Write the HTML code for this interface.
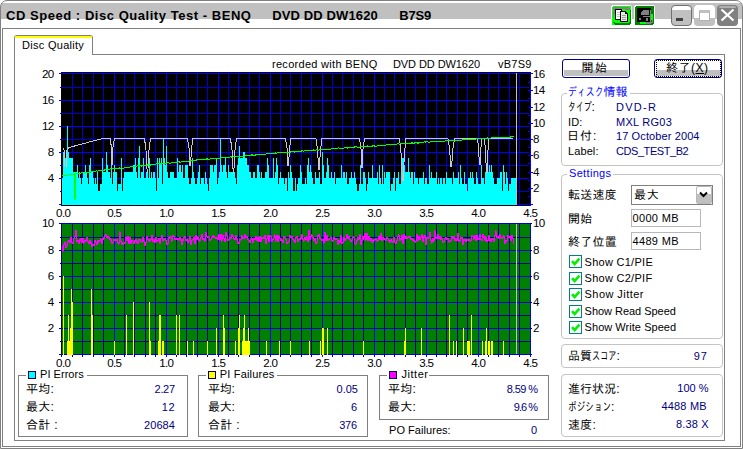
<!DOCTYPE html>
<html lang="ja">
<head>
<meta charset="utf-8">
<title>CD Speed : Disc Quality Test</title>
<style>
html,body{margin:0;padding:0;background:#fff;}
body{width:743px;height:449px;overflow:hidden;position:relative;font-family:"Liberation Sans","IPAGothic",sans-serif;font-size:11px;color:#000;}
#win div,#win svg{position:absolute;box-sizing:border-box;}
#win{position:absolute;left:0;top:0;width:743px;height:449px;background:#fff;overflow:hidden;}
.t{white-space:nowrap;line-height:14px;height:14px;font-size:11px;}
.ttl{white-space:nowrap;font-weight:bold;font-size:13px;line-height:16px;height:16px;}
.u{text-decoration:underline;}
.wm{background:#fff;}
.kw{display:inline-block;height:14px;vertical-align:top;}
.ks{display:inline-block;transform-origin:0 65%;}
.jp{font-size:12px;}
.nv{color:#000080;}
.bl{color:#0000ff;}
.r{text-align:right;}
.gb{border:1px solid #c4c4c4;border-radius:4px;}
.gbs{border:1px solid #808080;}
.btn{border:1px solid #000080;border-radius:3px;background:#fff;}
.btng{background:#c0c0c0;}
.edit{border:1px solid #b8b8b8;background:#fff;}
.cb{width:13px;height:13px;border:1px solid #008080;background:#fff;}
svg.charts{position:absolute;left:0;top:0;}
</style>
</head>
<body>
<div id="win">
<!-- title bar -->
<div style="left:0;top:0;width:743px;height:28px;background:#fff;"></div>
<div style="left:1px;top:3px;width:741px;height:16px;background:#c0c0c0;"></div>
<div style="left:0;top:0;width:743px;height:449px;border:1px solid #808080;border-radius:7px 7px 0 0;"></div>
<div style="left:2px;top:28px;width:739px;height:419px;border:1px solid #808080;"></div>
<svg style="left:610px;top:4px;" width="46" height="23" viewBox="610 4 46 23" shape-rendering="crispEdges">
<!-- copy icon -->
<rect x="611" y="5" width="21" height="21" rx="3" fill="#fff"/>
<rect x="612" y="6" width="19" height="19" rx="2" fill="#00ff00"/>
<path d="M613 7h8v2h-3v2h-2v3h-2v3h-1z" fill="#808080"/>
<path d="M621 7h7l2 2v1h-5v-1h-4z" fill="#808080"/>
<path d="M613 22h2v1h14v-1h1v-12h1v13l-2 2h-14l-2-2z" fill="#008000"/>
<rect x="615" y="9" width="7" height="11" fill="#000"/>
<rect x="616" y="10" width="5" height="9" fill="#fff"/>
<rect x="617" y="12" width="4" height="1" fill="#c0c0c0"/><rect x="617" y="14" width="4" height="1" fill="#c0c0c0"/><rect x="617" y="16" width="4" height="1" fill="#c0c0c0"/>
<path d="M620 11h5l3 3v8h-8z" fill="#000"/>
<path d="M621 12h4v2h2v7h-6z" fill="#e8e8e8"/>
<rect x="622" y="15" width="4" height="1" fill="#a0a0a0"/><rect x="622" y="17" width="4" height="1" fill="#a0a0a0"/><rect x="622" y="19" width="4" height="1" fill="#a0a0a0"/>
<!-- save icon -->
<rect x="634" y="5" width="21" height="21" rx="3" fill="#fff"/>
<rect x="635" y="6" width="19" height="19" rx="2" fill="#008000"/>
<rect x="637" y="8" width="14" height="14" fill="#000"/>
<path d="M641 12l2-2h6v5h-8z" fill="#808080"/>
<rect x="650" y="10" width="1" height="12" fill="#808080"/>
<rect x="643" y="16" width="7" height="1" fill="#808080"/>
<rect x="639" y="18" width="2" height="2" fill="#808080"/>
<rect x="646" y="18" width="2" height="3" fill="#808080"/>
<rect x="640" y="22" width="6" height="2" fill="#00ff00"/>
<path d="M646 22h6v-2h1v3h-2v1h-5z" fill="#808080"/>
<rect x="651" y="14" width="2" height="6" fill="#00ff00"/>
</svg>
<!-- caption buttons -->
<div style="left:671px;top:5px;width:21px;height:21px;border:1px solid #707070;border-radius:4px;background:linear-gradient(#fff 0,#fff 4px,#c0c0c0 4px);"></div>
<div style="left:676px;top:18px;width:7px;height:3px;background:#404040;"></div>
<div style="left:694px;top:5px;width:21px;height:21px;border-radius:4px;background:linear-gradient(#fff 0,#fff 13px,#c0c0c0 13px);"></div>
<div style="left:699px;top:10px;width:11px;height:11px;border:1px solid #b0b0b0;border-top:3px solid #c0c0c0;background:#fff;"></div>
<div style="left:717px;top:5px;width:21px;height:21px;border-radius:4px;background:#808080;"></div>
<div style="left:719px;top:6px;width:17px;height:2px;border-radius:2px 2px 0 0;background:#b0b0b0;"></div>
<svg style="left:720px;top:8px;" width="15" height="14" viewBox="0 0 15 14"><path d="M1.5 1.5L13.5 12.5M13.5 1.5L1.5 12.5" stroke="#fff" stroke-width="2.2" fill="none"/></svg>

<!-- tab -->
<div style="left:14px;top:54px;width:711px;height:387px;border:1px solid #808080;"></div>
<div style="left:14px;top:35px;width:79px;height:20px;border:1px solid #808080;border-bottom:none;border-radius:3px 3px 0 0;background:#fff;"></div>
<div style="left:15px;top:36px;width:77px;height:2px;background:#ffff00;"></div>
<svg class="charts" width="743" height="449" viewBox="0 0 743 449"><rect x="61" y="72" width="470" height="134" fill="#000"/><g shape-rendering="crispEdges"><rect x="72" y="73" width="1" height="133" fill="#0000c8"/><rect x="82" y="73" width="1" height="133" fill="#0000c8"/><rect x="93" y="73" width="1" height="133" fill="#0000c8"/><rect x="103" y="73" width="1" height="133" fill="#0000c8"/><rect x="114" y="73" width="1" height="133" fill="#00f"/><rect x="124" y="73" width="1" height="133" fill="#0000c8"/><rect x="134" y="73" width="1" height="133" fill="#0000c8"/><rect x="145" y="73" width="1" height="133" fill="#0000c8"/><rect x="155" y="73" width="1" height="133" fill="#0000c8"/><rect x="166" y="73" width="1" height="133" fill="#00f"/><rect x="176" y="73" width="1" height="133" fill="#0000c8"/><rect x="186" y="73" width="1" height="133" fill="#0000c8"/><rect x="197" y="73" width="1" height="133" fill="#0000c8"/><rect x="207" y="73" width="1" height="133" fill="#0000c8"/><rect x="218" y="73" width="1" height="133" fill="#00f"/><rect x="228" y="73" width="1" height="133" fill="#0000c8"/><rect x="238" y="73" width="1" height="133" fill="#0000c8"/><rect x="249" y="73" width="1" height="133" fill="#0000c8"/><rect x="259" y="73" width="1" height="133" fill="#0000c8"/><rect x="270" y="73" width="1" height="133" fill="#00f"/><rect x="280" y="73" width="1" height="133" fill="#0000c8"/><rect x="290" y="73" width="1" height="133" fill="#0000c8"/><rect x="301" y="73" width="1" height="133" fill="#0000c8"/><rect x="311" y="73" width="1" height="133" fill="#0000c8"/><rect x="322" y="73" width="1" height="133" fill="#00f"/><rect x="332" y="73" width="1" height="133" fill="#0000c8"/><rect x="342" y="73" width="1" height="133" fill="#0000c8"/><rect x="353" y="73" width="1" height="133" fill="#0000c8"/><rect x="363" y="73" width="1" height="133" fill="#0000c8"/><rect x="374" y="73" width="1" height="133" fill="#00f"/><rect x="384" y="73" width="1" height="133" fill="#0000c8"/><rect x="394" y="73" width="1" height="133" fill="#0000c8"/><rect x="405" y="73" width="1" height="133" fill="#0000c8"/><rect x="415" y="73" width="1" height="133" fill="#0000c8"/><rect x="426" y="73" width="1" height="133" fill="#00f"/><rect x="436" y="73" width="1" height="133" fill="#0000c8"/><rect x="446" y="73" width="1" height="133" fill="#0000c8"/><rect x="457" y="73" width="1" height="133" fill="#0000c8"/><rect x="467" y="73" width="1" height="133" fill="#0000c8"/><rect x="478" y="73" width="1" height="133" fill="#00f"/><rect x="488" y="73" width="1" height="133" fill="#0000c8"/><rect x="498" y="73" width="1" height="133" fill="#0000c8"/><rect x="509" y="73" width="1" height="133" fill="#0000c8"/><rect x="519" y="73" width="1" height="133" fill="#0000c8"/><rect x="530" y="73" width="1" height="133" fill="#00f"/><rect x="61" y="204" width="468" height="1" fill="#00f"/><rect x="59" y="204" width="2" height="1" fill="#00f"/><rect x="61" y="191" width="468" height="1" fill="#0000c8"/><rect x="60" y="191" width="1" height="1" fill="#00f"/><rect x="61" y="178" width="468" height="1" fill="#00f"/><rect x="59" y="178" width="2" height="1" fill="#00f"/><rect x="61" y="165" width="468" height="1" fill="#0000c8"/><rect x="60" y="165" width="1" height="1" fill="#00f"/><rect x="61" y="152" width="468" height="1" fill="#00f"/><rect x="59" y="152" width="2" height="1" fill="#00f"/><rect x="61" y="139" width="468" height="1" fill="#0000c8"/><rect x="60" y="139" width="1" height="1" fill="#00f"/><rect x="61" y="126" width="468" height="1" fill="#00f"/><rect x="59" y="126" width="2" height="1" fill="#00f"/><rect x="61" y="113" width="468" height="1" fill="#0000c8"/><rect x="60" y="113" width="1" height="1" fill="#00f"/><rect x="61" y="100" width="468" height="1" fill="#00f"/><rect x="59" y="100" width="2" height="1" fill="#00f"/><rect x="61" y="87" width="468" height="1" fill="#0000c8"/><rect x="60" y="87" width="1" height="1" fill="#00f"/><rect x="61" y="73" width="468" height="1" fill="#00f"/><rect x="59" y="73" width="2" height="1" fill="#00f"/><rect x="528" y="204" width="5" height="1" fill="#00f"/><rect x="528" y="196" width="2" height="1" fill="#00f"/><rect x="528" y="188" width="5" height="1" fill="#00f"/><rect x="528" y="180" width="2" height="1" fill="#00f"/><rect x="528" y="172" width="5" height="1" fill="#00f"/><rect x="528" y="163" width="2" height="1" fill="#00f"/><rect x="528" y="155" width="5" height="1" fill="#00f"/><rect x="528" y="147" width="2" height="1" fill="#00f"/><rect x="528" y="139" width="5" height="1" fill="#00f"/><rect x="528" y="131" width="2" height="1" fill="#00f"/><rect x="528" y="123" width="5" height="1" fill="#00f"/><rect x="528" y="115" width="2" height="1" fill="#00f"/><rect x="528" y="107" width="5" height="1" fill="#00f"/><rect x="528" y="98" width="2" height="1" fill="#00f"/><rect x="528" y="90" width="5" height="1" fill="#00f"/><rect x="528" y="82" width="2" height="1" fill="#00f"/><rect x="528" y="73" width="5" height="1" fill="#00f"/></g><path d="M62 205V178h1V205zM63 205V152h1V205zM64 205V152h1V205zM65 205V158h1V205zM66 205V152h1V205zM67 205V126h1V205zM68 205V152h1V205zM69 205V158h1V205zM70 205V158h1V205zM71 205V158h1V205zM72 205V158h1V205zM73 205V172h1V205zM74 205V172h1V205zM75 205V172h1V205zM76 205V172h1V205zM77 205V165h1V205zM78 205V178h1V205zM79 205V172h1V205zM80 205V178h1V205zM81 205V184h1V205zM82 205V178h1V205zM83 205V172h1V205zM84 205V172h1V205zM85 205V165h1V205zM86 205V172h1V205zM87 205V178h1V205zM88 205V184h1V205zM89 205V165h1V205zM90 205V158h1V205zM91 205V172h1V205zM92 205V172h1V205zM93 205V178h1V205zM94 205V184h1V205zM95 205V178h1V205zM96 205V184h1V205zM97 205V172h1V205zM98 205V191h1V205zM99 205V191h1V205zM100 205V184h1V205zM101 205V184h1V205zM102 205V158h1V205zM103 205V172h1V205zM104 205V172h1V205zM105 205V172h1V205zM106 205V152h1V205zM107 205V165h1V205zM108 205V172h1V205zM109 205V172h1V205zM110 205V178h1V205zM111 205V158h1V205zM112 205V184h1V205zM113 205V172h1V205zM114 205V165h1V205zM115 205V172h1V205zM116 205V172h1V205zM117 205V191h1V205zM118 205V184h1V205zM119 205V184h1V205zM120 205V184h1V205zM121 205V158h1V205zM122 205V191h1V205zM123 205V178h1V205zM124 205V172h1V205zM125 205V172h1V205zM126 205V172h1V205zM127 205V172h1V205zM128 205V172h1V205zM129 205V172h1V205zM130 205V172h1V205zM131 205V172h1V205zM132 205V172h1V205zM133 205V165h1V205zM134 205V165h1V205zM135 205V158h1V205zM136 205V172h1V205zM137 205V178h1V205zM138 205V158h1V205zM139 205V146h1V205zM140 205V178h1V205zM141 205V172h1V205zM142 205V172h1V205zM143 205V158h1V205zM144 205V178h1V205zM145 205V178h1V205zM146 205V172h1V205zM147 205V172h1V205zM148 205V178h1V205zM149 205V158h1V205zM150 205V178h1V205zM151 205V172h1V205zM152 205V178h1V205zM153 205V172h1V205zM154 205V172h1V205zM155 205V178h1V205zM156 205V191h1V205zM157 205V158h1V205zM158 205V178h1V205zM159 205V158h1V205zM160 205V165h1V205zM161 205V158h1V205zM162 205V184h1V205zM163 205V139h1V205zM164 205V158h1V205zM165 205V165h1V205zM166 205V146h1V205zM167 205V172h1V205zM168 205V178h1V205zM169 205V178h1V205zM170 205V172h1V205zM171 205V172h1V205zM172 205V172h1V205zM173 205V172h1V205zM174 205V178h1V205zM175 205V178h1V205zM176 205V178h1V205zM177 205V158h1V205zM178 205V172h1V205zM179 205V165h1V205zM180 205V165h1V205zM181 205V172h1V205zM182 205V165h1V205zM183 205V178h1V205zM184 205V178h1V205zM185 205V165h1V205zM186 205V165h1V205zM187 205V165h1V205zM188 205V178h1V205zM189 205V184h1V205zM190 205V184h1V205zM191 205V178h1V205zM192 205V158h1V205zM193 205V172h1V205zM194 205V178h1V205zM195 205V184h1V205zM196 205V184h1V205zM197 205V178h1V205zM198 205V172h1V205zM199 205V165h1V205zM200 205V184h1V205zM201 205V178h1V205zM202 205V178h1V205zM203 205V178h1V205zM204 205V184h1V205zM205 205V172h1V205zM206 205V178h1V205zM207 205V184h1V205zM208 205V191h1V205zM209 205V178h1V205zM210 205V165h1V205zM211 205V165h1V205zM212 205V165h1V205zM213 205V172h1V205zM214 205V165h1V205zM215 205V165h1V205zM216 205V158h1V205zM217 205V184h1V205zM218 205V178h1V205zM219 205V172h1V205zM220 205V139h1V205zM221 205V165h1V205zM222 205V172h1V205zM223 205V165h1V205zM224 205V165h1V205zM225 205V158h1V205zM226 205V172h1V205zM227 205V178h1V205zM228 205V165h1V205zM229 205V172h1V205zM230 205V172h1V205zM231 205V172h1V205zM232 205V172h1V205zM233 205V172h1V205zM234 205V172h1V205zM235 205V178h1V205zM236 205V184h1V205zM237 205V165h1V205zM238 205V158h1V205zM239 205V146h1V205zM240 205V158h1V205zM241 205V158h1V205zM242 205V158h1V205zM243 205V152h1V205zM244 205V152h1V205zM245 205V158h1V205zM246 205V158h1V205zM247 205V165h1V205zM248 205V165h1V205zM249 205V172h1V205zM250 205V172h1V205zM251 205V178h1V205zM252 205V178h1V205zM253 205V172h1V205zM254 205V172h1V205zM255 205V178h1V205zM256 205V178h1V205zM257 205V165h1V205zM258 205V165h1V205zM259 205V172h1V205zM260 205V178h1V205zM261 205V172h1V205zM262 205V178h1V205zM263 205V178h1V205zM264 205V178h1V205zM265 205V172h1V205zM266 205V172h1V205zM267 205V158h1V205zM268 205V165h1V205zM269 205V178h1V205zM270 205V178h1V205zM271 205V178h1V205zM272 205V178h1V205zM273 205V158h1V205zM274 205V178h1V205zM275 205V172h1V205zM276 205V158h1V205zM277 205V165h1V205zM278 205V184h1V205zM279 205V178h1V205zM280 205V172h1V205zM281 205V178h1V205zM282 205V178h1V205zM283 205V178h1V205zM284 205V184h1V205zM285 205V178h1V205zM286 205V178h1V205zM287 205V191h1V205zM288 205V172h1V205zM289 205V178h1V205zM290 205V165h1V205zM291 205V172h1V205zM292 205V178h1V205zM293 205V191h1V205zM294 205V191h1V205zM295 205V178h1V205zM296 205V191h1V205zM297 205V184h1V205zM298 205V178h1V205zM299 205V178h1V205zM300 205V165h1V205zM301 205V172h1V205zM302 205V184h1V205zM303 205V184h1V205zM304 205V184h1V205zM305 205V178h1V205zM306 205V184h1V205zM307 205V165h1V205zM308 205V158h1V205zM309 205V172h1V205zM310 205V165h1V205zM311 205V172h1V205zM312 205V178h1V205zM313 205V184h1V205zM314 205V184h1V205zM315 205V172h1V205zM316 205V178h1V205zM317 205V178h1V205zM318 205V178h1V205zM319 205V172h1V205zM320 205V184h1V205zM321 205V184h1V205zM322 205V152h1V205zM323 205V165h1V205zM324 205V178h1V205zM325 205V178h1V205zM326 205V172h1V205zM327 205V158h1V205zM328 205V165h1V205zM329 205V178h1V205zM330 205V178h1V205zM331 205V172h1V205zM332 205V178h1V205zM333 205V178h1V205zM334 205V172h1V205zM335 205V184h1V205zM336 205V178h1V205zM337 205V178h1V205zM338 205V178h1V205zM339 205V178h1V205zM340 205V178h1V205zM341 205V165h1V205zM342 205V178h1V205zM343 205V172h1V205zM344 205V172h1V205zM345 205V178h1V205zM346 205V172h1V205zM347 205V184h1V205zM348 205V184h1V205zM349 205V178h1V205zM350 205V178h1V205zM351 205V172h1V205zM352 205V178h1V205zM353 205V178h1V205zM354 205V172h1V205zM355 205V178h1V205zM356 205V184h1V205zM357 205V191h1V205zM358 205V191h1V205zM359 205V184h1V205zM360 205V165h1V205zM361 205V184h1V205zM362 205V184h1V205zM363 205V172h1V205zM364 205V172h1V205zM365 205V178h1V205zM366 205V191h1V205zM367 205V184h1V205zM368 205V172h1V205zM369 205V178h1V205zM370 205V178h1V205zM371 205V178h1V205zM372 205V165h1V205zM373 205V178h1V205zM374 205V178h1V205zM375 205V178h1V205zM376 205V178h1V205zM377 205V172h1V205zM378 205V184h1V205zM379 205V165h1V205zM380 205V178h1V205zM381 205V184h1V205zM382 205V165h1V205zM383 205V184h1V205zM384 205V172h1V205zM385 205V178h1V205zM386 205V172h1V205zM387 205V172h1V205zM388 205V172h1V205zM389 205V172h1V205zM390 205V191h1V205zM391 205V184h1V205zM392 205V184h1V205zM393 205V178h1V205zM394 205V172h1V205zM395 205V191h1V205zM396 205V178h1V205zM397 205V178h1V205zM398 205V172h1V205zM399 205V184h1V205zM400 205V184h1V205zM401 205V172h1V205zM402 205V158h1V205zM403 205V158h1V205zM404 205V165h1V205zM405 205V172h1V205zM406 205V172h1V205zM407 205V172h1V205zM408 205V158h1V205zM409 205V172h1V205zM410 205V178h1V205zM411 205V172h1V205zM412 205V172h1V205zM413 205V184h1V205zM414 205V172h1V205zM415 205V178h1V205zM416 205V178h1V205zM417 205V178h1V205zM418 205V184h1V205zM419 205V178h1V205zM420 205V178h1V205zM421 205V178h1V205zM422 205V178h1V205zM423 205V172h1V205zM424 205V184h1V205zM425 205V178h1V205zM426 205V178h1V205zM427 205V184h1V205zM428 205V184h1V205zM429 205V165h1V205zM430 205V178h1V205zM431 205V172h1V205zM432 205V178h1V205zM433 205V178h1V205zM434 205V178h1V205zM435 205V178h1V205zM436 205V172h1V205zM437 205V184h1V205zM438 205V178h1V205zM439 205V184h1V205zM440 205V178h1V205zM441 205V178h1V205zM442 205V184h1V205zM443 205V178h1V205zM444 205V178h1V205zM445 205V184h1V205zM446 205V172h1V205zM447 205V178h1V205zM448 205V178h1V205zM449 205V178h1V205zM450 205V178h1V205zM451 205V178h1V205zM452 205V184h1V205zM453 205V172h1V205zM454 205V178h1V205zM455 205V178h1V205zM456 205V178h1V205zM457 205V178h1V205zM458 205V172h1V205zM459 205V184h1V205zM460 205V165h1V205zM461 205V178h1V205zM462 205V184h1V205zM463 205V184h1V205zM464 205V172h1V205zM465 205V184h1V205zM466 205V184h1V205zM467 205V191h1V205zM468 205V178h1V205zM469 205V178h1V205zM470 205V172h1V205zM471 205V178h1V205zM472 205V172h1V205zM473 205V178h1V205zM474 205V184h1V205zM475 205V184h1V205zM476 205V172h1V205zM477 205V178h1V205zM478 205V184h1V205zM479 205V184h1V205zM480 205V184h1V205zM481 205V165h1V205zM482 205V178h1V205zM483 205V178h1V205zM484 205V184h1V205zM485 205V172h1V205zM486 205V165h1V205zM487 205V165h1V205zM488 205V172h1V205zM489 205V165h1V205zM490 205V172h1V205zM491 205V165h1V205zM492 205V172h1V205zM493 205V178h1V205zM494 205V184h1V205zM495 205V184h1V205zM496 205V184h1V205zM497 205V178h1V205zM498 205V178h1V205zM499 205V178h1V205zM500 205V172h1V205zM501 205V172h1V205zM502 205V191h1V205zM503 205V165h1V205zM504 205V172h1V205zM505 205V184h1V205zM506 205V172h1V205zM507 205V178h1V205zM508 205V191h1V205zM509 205V184h1V205zM510 205V184h1V205zM511 205V178h1V205zM512 205V178h1V205zM513 205V178h1V205zM514 205V178h1V205zM515 205V178h1V205zM516 205V178h1V205z" fill="#0ff" shape-rendering="crispEdges"/><polyline shape-rendering="crispEdges" fill="none" stroke="#c8c8c8" stroke-width="1" points="63.0,148.0 64.0,150.0 65.0,166.0 66.0,167.0 67.0,150.0 69.0,147.5 102.5,138.5 110.0,138.5 111.5,147.4 112.0,164.0 112.5,164.0 113.0,147.4 114.5,138.5 144.5,138.5 146.0,150.4 147.2,172.5 147.8,172.5 149.0,150.4 150.5,138.5 187.5,138.5 189.0,147.8 189.9,165.0 190.6,165.0 191.5,147.8 193.0,138.5 230.5,138.5 232.0,150.2 233.2,172.0 233.8,172.0 235.0,150.2 236.5,138.5 285.5,138.5 287.0,147.9 287.9,165.5 288.6,165.5 289.5,147.9 291.0,138.5 316.0,138.5 317.5,149.2 318.7,169.0 319.3,169.0 320.5,149.2 322.0,138.5 359.5,138.5 361.0,148.7 361.7,167.5 362.3,167.5 363.0,148.7 364.5,138.5 399.5,138.5 401.0,153.0 402.4,180.0 403.1,180.0 404.5,153.0 406.0,138.5 448.0,138.5 449.5,148.1 450.9,166.0 451.6,166.0 453.0,148.1 454.5,138.5 477.5,138.5 478.5,147.4 479.4,164.0 480.1,164.0 481.0,147.4 482.0,138.5 484.5,138.5 485.5,150.4 486.4,172.5 487.1,172.5 488.0,150.4 489.0,138.5 513.0,138.5"/><polyline shape-rendering="crispEdges" fill="none" stroke="#00ff00" stroke-width="1" points="62.0,176.1 63.0,175.0 64.0,175.8 65.0,175.2 66.0,175.6 67.0,174.9 68.0,175.3 69.0,174.1 70.0,174.5 71.0,173.9 72.0,174.2 73.0,174.1 74.0,174.4 74.5,173.8 75.0,200.0 75.5,173.8 76.0,174.2 77.0,173.5 78.0,173.4 79.0,173.8 80.0,173.1 81.0,173.0 82.0,172.4 83.0,172.7 84.0,173.1 85.0,173.0 86.0,172.3 87.0,172.2 88.0,172.1 89.0,172.4 90.0,172.3 91.0,171.7 92.0,171.6 93.0,171.9 94.0,171.3 95.0,171.7 96.0,171.0 97.0,170.9 98.0,171.3 99.0,170.2 100.0,170.5 101.0,170.9 102.0,170.3 103.0,170.2 104.0,170.1 105.0,169.9 106.0,169.3 107.0,169.7 108.0,170.1 109.0,169.5 110.0,168.8 111.0,168.7 112.0,169.1 113.0,168.5 114.0,168.9 115.0,168.7 116.0,168.6 117.0,168.5 118.0,168.4 119.0,167.8 120.0,168.2 121.0,168.0 122.0,167.9 123.0,168.3 124.0,168.2 125.0,167.6 126.0,167.5 127.0,167.4 128.0,167.2 129.0,167.6 130.0,167.0 131.0,166.9 132.0,166.3 133.0,167.2 134.0,166.6 135.0,166.0 136.0,166.4 137.0,166.2 138.0,165.6 139.0,166.5 140.0,165.4 141.0,165.8 142.0,166.2 143.0,165.6 144.0,165.0 145.0,165.4 146.0,165.3 147.0,165.7 148.0,164.6 149.0,165.0 150.0,165.4 151.0,164.7 152.0,164.6 153.0,164.5 154.0,164.4 155.0,164.3 156.0,164.2 157.0,163.6 158.0,164.0 159.0,163.9 160.0,163.8 161.0,164.2 162.0,163.1 163.0,164.0 164.0,162.9 165.0,163.3 166.0,163.7 167.0,163.1 168.0,162.5 169.0,162.9 170.0,163.3 171.0,163.2 172.0,162.6 173.0,163.0 174.0,161.9 175.0,162.8 176.0,162.2 177.0,162.1 178.0,162.0 179.0,161.4 180.0,162.3 181.0,162.2 182.0,161.6 183.0,162.0 184.0,160.9 185.0,161.8 186.0,161.2 187.0,161.6 188.0,161.5 189.0,160.9 190.0,160.8 191.0,160.7 192.0,160.6 193.0,161.0 194.0,160.4 195.0,160.4 196.0,160.8 197.0,159.7 198.0,159.6 199.0,160.0 200.0,159.9 201.0,159.8 202.0,159.7 203.0,159.6 204.0,159.0 205.0,159.4 206.0,159.3 207.0,158.7 208.0,159.6 209.0,159.0 210.0,159.0 211.0,158.9 212.0,158.3 213.0,158.7 214.0,158.6 215.0,158.5 216.0,158.9 217.0,158.3 218.0,158.2 219.0,158.1 220.0,158.0 221.0,158.0 222.0,157.4 223.0,157.8 224.0,157.7 225.0,157.6 226.0,157.0 227.0,157.4 228.0,157.8 229.0,157.2 230.0,157.2 231.0,156.6 232.0,157.5 233.0,156.9 234.0,156.3 235.0,156.7 236.0,156.1 237.0,156.0 238.0,156.5 239.0,156.4 240.0,156.3 241.0,156.2 242.0,156.1 243.0,156.0 244.0,156.4 245.0,155.8 246.0,155.8 247.0,155.7 248.0,156.1 249.0,155.5 250.0,155.4 251.0,155.3 252.0,154.7 253.0,155.2 254.0,155.1 255.0,155.5 256.0,154.4 257.0,154.3 258.0,154.2 259.0,154.7 260.0,154.6 261.0,154.0 262.0,154.9 263.0,154.3 264.0,154.2 265.0,154.7 266.0,154.1 267.0,153.5 268.0,153.9 269.0,153.8 270.0,153.7 271.0,153.7 272.0,154.1 273.0,153.5 274.0,153.4 275.0,152.8 276.0,153.3 277.0,153.2 278.0,152.6 279.0,153.0 280.0,152.9 281.0,152.3 282.0,152.8 283.0,152.7 284.0,152.6 285.0,152.5 286.0,152.4 287.0,152.4 288.0,151.8 289.0,152.7 290.0,152.6 291.0,151.5 292.0,152.0 293.0,151.9 294.0,151.8 295.0,152.2 296.0,151.6 297.0,151.1 298.0,151.5 299.0,151.4 300.0,151.3 301.0,151.3 302.0,150.7 303.0,151.1 304.0,151.0 305.0,150.9 306.0,150.4 307.0,150.8 308.0,150.2 309.0,150.6 310.0,151.1 311.0,150.0 312.0,150.4 313.0,149.8 314.0,150.2 315.0,150.2 316.0,150.1 317.0,149.5 318.0,150.4 319.0,149.9 320.0,149.8 321.0,149.7 322.0,149.6 323.0,149.6 324.0,150.0 325.0,149.4 326.0,149.3 327.0,149.3 328.0,149.2 329.0,149.6 330.0,149.0 331.0,149.0 332.0,148.9 333.0,148.3 334.0,148.7 335.0,148.2 336.0,148.1 337.0,149.0 338.0,147.9 339.0,147.9 340.0,148.8 341.0,148.2 342.0,148.1 343.0,148.1 344.0,148.0 345.0,147.9 346.0,147.3 347.0,147.8 348.0,148.2 349.0,147.6 350.0,147.5 351.0,147.5 352.0,147.4 353.0,147.3 354.0,147.2 355.0,146.7 356.0,146.6 357.0,147.0 358.0,147.0 359.0,147.4 360.0,146.8 361.0,146.2 362.0,146.2 363.0,146.1 364.0,147.0 365.0,146.0 366.0,146.4 367.0,145.8 368.0,146.2 369.0,146.2 370.0,146.1 371.0,146.0 372.0,146.5 373.0,145.4 374.0,145.8 375.0,146.2 376.0,146.2 377.0,146.1 378.0,145.5 379.0,146.0 380.0,145.4 381.0,145.3 382.0,145.2 383.0,145.2 384.0,145.1 385.0,145.0 386.0,145.0 387.0,144.9 388.0,144.8 389.0,144.8 390.0,144.7 391.0,144.1 392.0,145.0 393.0,144.0 394.0,144.4 395.0,144.3 396.0,144.3 397.0,144.2 398.0,143.6 399.0,144.1 400.0,144.0 401.0,143.9 402.0,143.9 403.0,143.8 404.0,143.7 405.0,143.6 406.0,143.6 407.0,144.0 408.0,143.4 409.0,142.9 410.0,143.3 411.0,143.7 412.0,142.7 413.0,143.6 414.0,143.5 415.0,142.5 416.0,142.9 417.0,142.8 418.0,143.3 419.0,142.7 420.0,142.1 421.0,142.6 422.0,142.5 423.0,142.9 424.0,141.9 425.0,141.8 426.0,142.2 427.0,141.7 428.0,142.1 429.0,142.0 430.0,142.0 431.0,141.9 432.0,141.8 433.0,141.8 434.0,141.2 435.0,141.6 436.0,141.6 437.0,141.5 438.0,141.4 439.0,141.4 440.0,141.3 441.0,141.2 442.0,141.2 443.0,141.1 444.0,141.0 445.0,141.0 446.0,140.4 447.0,140.8 448.0,140.8 449.0,140.2 450.0,140.6 451.0,141.1 452.0,140.5 453.0,140.4 454.0,140.4 455.0,140.3 456.0,140.2 457.0,140.2 458.0,140.1 459.0,140.1 460.0,140.0 461.0,140.4 462.0,139.9 463.0,139.8 464.0,139.7 465.0,139.7 466.0,139.6 467.0,139.5 468.0,139.5 469.0,139.9 470.0,139.3 471.0,139.3 472.0,139.2 473.0,139.2 474.0,139.1 475.0,139.0 476.0,139.0 477.0,138.9 478.0,138.3 479.0,138.3 480.0,139.2 481.0,138.6 482.0,138.1 483.0,138.5 484.0,139.0 485.0,138.4 486.0,138.8 487.0,137.8 488.0,138.2 489.0,138.1 490.0,138.6 491.0,138.0 492.0,137.5 493.0,137.4 494.0,137.8 495.0,137.8 496.0,137.2 497.0,137.6 498.0,137.6 499.0,138.0 500.0,137.5 501.0,136.9 502.0,137.3 503.0,137.3 504.0,137.2 505.0,137.1 506.0,137.1 507.0,137.5 508.0,137.0 509.0,137.4 510.0,136.8 511.0,137.3 512.0,136.2 513.0,136.6 514.0,136.1"/><rect x="516" y="73" width="1" height="132" fill="#c0c0c0" shape-rendering="crispEdges"/><rect x="61" y="223" width="470" height="132" fill="#008000"/><g shape-rendering="crispEdges"><rect x="61" y="223" width="1" height="134" fill="#000090"/><rect x="72" y="223" width="1" height="134" fill="#000090"/><rect x="82" y="223" width="1" height="134" fill="#000090"/><rect x="93" y="223" width="1" height="134" fill="#000090"/><rect x="103" y="223" width="1" height="134" fill="#000090"/><rect x="114" y="223" width="1" height="134" fill="#0000ff"/><rect x="124" y="223" width="1" height="134" fill="#000090"/><rect x="134" y="223" width="1" height="134" fill="#000090"/><rect x="145" y="223" width="1" height="134" fill="#000090"/><rect x="155" y="223" width="1" height="134" fill="#000090"/><rect x="166" y="223" width="1" height="134" fill="#0000ff"/><rect x="176" y="223" width="1" height="134" fill="#000090"/><rect x="186" y="223" width="1" height="134" fill="#000090"/><rect x="197" y="223" width="1" height="134" fill="#000090"/><rect x="207" y="223" width="1" height="134" fill="#000090"/><rect x="218" y="223" width="1" height="134" fill="#0000ff"/><rect x="228" y="223" width="1" height="134" fill="#000090"/><rect x="238" y="223" width="1" height="134" fill="#000090"/><rect x="249" y="223" width="1" height="134" fill="#000090"/><rect x="259" y="223" width="1" height="134" fill="#000090"/><rect x="270" y="223" width="1" height="134" fill="#0000ff"/><rect x="280" y="223" width="1" height="134" fill="#000090"/><rect x="290" y="223" width="1" height="134" fill="#000090"/><rect x="301" y="223" width="1" height="134" fill="#000090"/><rect x="311" y="223" width="1" height="134" fill="#000090"/><rect x="322" y="223" width="1" height="134" fill="#0000ff"/><rect x="332" y="223" width="1" height="134" fill="#000090"/><rect x="342" y="223" width="1" height="134" fill="#000090"/><rect x="353" y="223" width="1" height="134" fill="#000090"/><rect x="363" y="223" width="1" height="134" fill="#000090"/><rect x="374" y="223" width="1" height="134" fill="#0000ff"/><rect x="384" y="223" width="1" height="134" fill="#000090"/><rect x="394" y="223" width="1" height="134" fill="#000090"/><rect x="405" y="223" width="1" height="134" fill="#000090"/><rect x="415" y="223" width="1" height="134" fill="#000090"/><rect x="426" y="223" width="1" height="134" fill="#0000ff"/><rect x="436" y="223" width="1" height="134" fill="#000090"/><rect x="446" y="223" width="1" height="134" fill="#000090"/><rect x="457" y="223" width="1" height="134" fill="#000090"/><rect x="467" y="223" width="1" height="134" fill="#000090"/><rect x="478" y="223" width="1" height="134" fill="#0000ff"/><rect x="488" y="223" width="1" height="134" fill="#000090"/><rect x="498" y="223" width="1" height="134" fill="#000090"/><rect x="509" y="223" width="1" height="134" fill="#000090"/><rect x="519" y="223" width="1" height="134" fill="#000090"/><rect x="530" y="223" width="1" height="134" fill="#0000ff"/><rect x="61" y="354" width="469" height="1" fill="#0000e0"/><rect x="59" y="354" width="2" height="1" fill="#000090"/><rect x="530" y="354" width="2" height="1" fill="#000090"/><rect x="61" y="341" width="469" height="1" fill="#000090"/><rect x="60" y="341" width="1" height="1" fill="#000090"/><rect x="530" y="341" width="1" height="1" fill="#000090"/><rect x="61" y="328" width="469" height="1" fill="#0000e0"/><rect x="59" y="328" width="2" height="1" fill="#000090"/><rect x="530" y="328" width="2" height="1" fill="#000090"/><rect x="61" y="315" width="469" height="1" fill="#000090"/><rect x="60" y="315" width="1" height="1" fill="#000090"/><rect x="530" y="315" width="1" height="1" fill="#000090"/><rect x="61" y="302" width="469" height="1" fill="#0000e0"/><rect x="59" y="302" width="2" height="1" fill="#000090"/><rect x="530" y="302" width="2" height="1" fill="#000090"/><rect x="61" y="289" width="469" height="1" fill="#000090"/><rect x="60" y="289" width="1" height="1" fill="#000090"/><rect x="530" y="289" width="1" height="1" fill="#000090"/><rect x="61" y="276" width="469" height="1" fill="#0000e0"/><rect x="59" y="276" width="2" height="1" fill="#000090"/><rect x="530" y="276" width="2" height="1" fill="#000090"/><rect x="61" y="263" width="469" height="1" fill="#000090"/><rect x="60" y="263" width="1" height="1" fill="#000090"/><rect x="530" y="263" width="1" height="1" fill="#000090"/><rect x="61" y="250" width="469" height="1" fill="#0000e0"/><rect x="59" y="250" width="2" height="1" fill="#000090"/><rect x="530" y="250" width="2" height="1" fill="#000090"/><rect x="61" y="237" width="469" height="1" fill="#000090"/><rect x="60" y="237" width="1" height="1" fill="#000090"/><rect x="530" y="237" width="1" height="1" fill="#000090"/><rect x="61" y="223" width="469" height="1" fill="#0000e0"/><rect x="59" y="223" width="2" height="1" fill="#000090"/><rect x="530" y="223" width="2" height="1" fill="#000090"/><rect x="63" y="276" width="1" height="79" fill="#ff0"/><rect x="68" y="315" width="1" height="40" fill="#ff0"/><rect x="67" y="341" width="6" height="14" fill="#ff0"/><rect x="70" y="328" width="1" height="27" fill="#ff0"/><rect x="71" y="289" width="1" height="66" fill="#ff0"/><rect x="72" y="302" width="1" height="53" fill="#ff0"/><rect x="91" y="289" width="1" height="66" fill="#ff0"/><rect x="92" y="315" width="1" height="40" fill="#ff0"/><rect x="114" y="341" width="1" height="14" fill="#ff0"/><rect x="126" y="315" width="1" height="40" fill="#ff0"/><rect x="133" y="302" width="1" height="53" fill="#ff0"/><rect x="149" y="302" width="1" height="53" fill="#ff0"/><rect x="150" y="341" width="1" height="14" fill="#ff0"/><rect x="158" y="341" width="3" height="14" fill="#ff0"/><rect x="159" y="315" width="1" height="40" fill="#ff0"/><rect x="160" y="315" width="1" height="40" fill="#ff0"/><rect x="162" y="341" width="2" height="14" fill="#ff0"/><rect x="176" y="315" width="1" height="40" fill="#ff0"/><rect x="179" y="315" width="1" height="40" fill="#ff0"/><rect x="187" y="341" width="1" height="14" fill="#ff0"/><rect x="193" y="341" width="1" height="14" fill="#ff0"/><rect x="207" y="341" width="1" height="14" fill="#ff0"/><rect x="216" y="328" width="1" height="27" fill="#ff0"/><rect x="224" y="328" width="1" height="27" fill="#ff0"/><rect x="207" y="341" width="1" height="14" fill="#ff0"/><rect x="223" y="315" width="1" height="40" fill="#ff0"/><rect x="235" y="341" width="1" height="14" fill="#ff0"/><rect x="238" y="328" width="1" height="27" fill="#ff0"/><rect x="239" y="315" width="1" height="40" fill="#ff0"/><rect x="242" y="341" width="8" height="14" fill="#ff0"/><rect x="244" y="315" width="1" height="40" fill="#ff0"/><rect x="243" y="328" width="1" height="27" fill="#ff0"/><rect x="248" y="328" width="1" height="27" fill="#ff0"/><rect x="266" y="341" width="1" height="14" fill="#ff0"/><rect x="279" y="341" width="1" height="14" fill="#ff0"/><rect x="290" y="341" width="1" height="14" fill="#ff0"/><rect x="309" y="341" width="1" height="14" fill="#ff0"/><rect x="320" y="341" width="1" height="14" fill="#ff0"/><rect x="322" y="328" width="2" height="27" fill="#ff0"/><rect x="327" y="328" width="1" height="27" fill="#ff0"/><rect x="363" y="341" width="1" height="14" fill="#ff0"/><rect x="404" y="341" width="2" height="14" fill="#ff0"/><rect x="405" y="328" width="1" height="27" fill="#ff0"/><rect x="421" y="328" width="1" height="27" fill="#ff0"/><rect x="449" y="315" width="1" height="40" fill="#ff0"/><rect x="453" y="341" width="1" height="14" fill="#ff0"/><rect x="456" y="341" width="1" height="14" fill="#ff0"/><rect x="463" y="328" width="1" height="27" fill="#ff0"/><rect x="467" y="341" width="3" height="14" fill="#ff0"/><rect x="471" y="315" width="1" height="40" fill="#ff0"/><rect x="482" y="341" width="1" height="14" fill="#ff0"/><rect x="485" y="341" width="2" height="14" fill="#ff0"/><rect x="486" y="328" width="1" height="27" fill="#ff0"/><rect x="488" y="341" width="2" height="14" fill="#ff0"/><rect x="491" y="341" width="2" height="14" fill="#ff0"/><rect x="503" y="341" width="1" height="14" fill="#ff0"/></g><g shape-rendering="crispEdges" fill="none" stroke="#ff00ff" stroke-width="1"><polyline points="62.0,245.6 63.0,250.4 64.0,244.0 65.0,241.7 66.0,247.0 67.0,244.9 68.0,241.0 69.0,240.3 70.0,242.2 71.0,236.9 72.0,241.9 73.0,243.1 74.0,238.1 75.0,236.5 76.0,229.8 77.0,240.6 78.0,240.2 79.0,242.9 80.0,239.4 81.0,238.2 82.0,241.7 83.0,238.4 84.0,242.4 85.0,240.1 86.0,240.0 87.0,237.1 88.0,241.2 89.0,243.1 90.0,240.4 91.0,242.4 92.0,245.6 93.0,244.4 94.0,244.9 95.0,240.6 96.0,242.0 97.0,243.9 98.0,240.5 99.0,241.3 100.0,240.0 101.0,238.5 102.0,242.8 103.0,238.2 104.0,237.8 105.0,234.6 106.0,234.4 107.0,236.5 108.0,236.3 109.0,237.4 110.0,239.2 111.0,238.8 112.0,242.6 113.0,242.0 114.0,239.5 115.0,239.4 116.0,239.0 117.0,239.0 118.0,241.9 119.0,243.5 120.0,231.5 121.0,240.9 122.0,242.5 123.0,243.7 124.0,242.8 125.0,242.1 126.0,237.3 127.0,240.2 128.0,235.9 129.0,243.2 130.0,237.4 131.0,242.7 132.0,239.8 133.0,240.9 134.0,242.6 135.0,240.4 136.0,239.2 137.0,241.6 138.0,242.7 139.0,239.2 140.0,239.0 141.0,241.1 142.0,241.3 143.0,237.2 144.0,240.9 145.0,245.1 146.0,241.7 147.0,236.3 148.0,238.9 149.0,239.6 150.0,241.0 151.0,238.5 152.0,234.7 153.0,240.5 154.0,239.6 155.0,241.5 156.0,237.0 157.0,241.2 158.0,239.7 159.0,237.9 160.0,243.0 161.0,237.6 162.0,235.5 163.0,239.4 164.0,238.8 165.0,238.3 166.0,240.0 167.0,243.4 168.0,242.8 169.0,237.4 170.0,236.6 171.0,237.1 172.0,240.5 173.0,235.4 174.0,235.9 175.0,238.8 176.0,237.8 177.0,238.9 178.0,238.7 179.0,239.4 180.0,236.8 181.0,239.5 182.0,243.6 183.0,239.5 184.0,237.2 185.0,235.7 186.0,240.1 187.0,239.0 188.0,242.2 189.0,239.7 190.0,236.2 191.0,244.2 192.0,239.6 193.0,238.8 194.0,236.8 195.0,242.8 196.0,235.4 197.0,238.5 198.0,236.6 199.0,240.3 200.0,239.8 201.0,236.8 202.0,233.8 203.0,238.6 204.0,237.9 205.0,240.5 206.0,232.2 207.0,235.9 208.0,236.9 209.0,237.0 210.0,240.2 211.0,238.9 212.0,236.7 213.0,235.5 214.0,236.5 215.0,236.7 216.0,238.2 217.0,237.4 218.0,238.9 219.0,233.8 220.0,239.5 221.0,234.0 222.0,240.5 223.0,235.3 224.0,238.1 225.0,241.0 226.0,231.6 227.0,234.8 228.0,239.9 229.0,239.1 230.0,236.9 231.0,237.6 232.0,234.5 233.0,236.0 234.0,237.9 235.0,239.3 236.0,235.0 237.0,239.1 238.0,242.9 239.0,242.8 240.0,239.1 241.0,239.1 242.0,234.7 243.0,237.4 244.0,237.8 245.0,234.6 246.0,236.4 247.0,236.3 248.0,238.7 249.0,239.8 250.0,242.0 251.0,239.1 252.0,237.5 253.0,242.1 254.0,238.0 255.0,238.9 256.0,235.7 257.0,240.0 258.0,236.7 259.0,241.2 260.0,235.9 261.0,241.3 262.0,237.1 263.0,238.1 264.0,237.6 265.0,234.9 266.0,242.9 267.0,238.2 268.0,234.7 269.0,240.8 270.0,235.0 271.0,236.0 272.0,240.5 273.0,238.8 274.0,236.7 275.0,234.6 276.0,240.5 277.0,234.7 278.0,241.2 279.0,235.6 280.0,238.3 281.0,239.6 282.0,239.9 283.0,242.3 284.0,236.2 285.0,236.7 286.0,238.7 287.0,242.5 288.0,242.2 289.0,240.9 290.0,234.7 291.0,236.6 292.0,235.9 293.0,239.2 294.0,240.2 295.0,241.9 296.0,236.6 297.0,236.3 298.0,240.9 299.0,238.8 300.0,239.1 301.0,237.6 302.0,234.4 303.0,238.7 304.0,240.5 305.0,236.9 306.0,239.2 307.0,236.5 308.0,241.2 309.0,229.8 310.0,239.2 311.0,236.1 312.0,234.6 313.0,237.2 314.0,239.5 315.0,238.4 316.0,242.9 317.0,242.6 318.0,235.3 319.0,234.5 320.0,237.6 321.0,239.2 322.0,238.9 323.0,239.4 324.0,242.7 325.0,232.1 326.0,239.6 327.0,235.4 328.0,240.0 329.0,239.2 330.0,238.0 331.0,237.1 332.0,240.3 333.0,240.0 334.0,237.5 335.0,239.0 336.0,238.6 337.0,238.5 338.0,243.7 339.0,239.9 340.0,241.9 341.0,235.4 342.0,242.9 343.0,241.7 344.0,236.9 345.0,239.4 346.0,238.0 347.0,233.9 348.0,238.2 349.0,236.1 350.0,238.6 351.0,241.1 352.0,239.9 353.0,237.1 354.0,236.8 355.0,243.1 356.0,243.2 357.0,240.4 358.0,237.0 359.0,239.1 360.0,234.4 361.0,243.8 362.0,240.3 363.0,235.8 364.0,238.5 365.0,233.0 366.0,239.5 367.0,232.9 368.0,240.1 369.0,236.5 370.0,240.1 371.0,238.0 372.0,240.4 373.0,242.2 374.0,239.6 375.0,239.2 376.0,238.6 377.0,240.3 378.0,239.9 379.0,236.1 380.0,238.6 381.0,232.6 382.0,239.5 383.0,237.0 384.0,238.4 385.0,238.8 386.0,240.0 387.0,237.6 388.0,237.9 389.0,239.8 390.0,241.5 391.0,238.9 392.0,241.3 393.0,241.2 394.0,237.3 395.0,241.9 396.0,242.9 397.0,240.5 398.0,236.1 399.0,234.6 400.0,240.3 401.0,238.5 402.0,234.8 403.0,242.9 404.0,234.3 405.0,237.4 406.0,236.4 407.0,237.6 408.0,237.2 409.0,236.2 410.0,236.2 411.0,238.9 412.0,237.8 413.0,239.5 414.0,240.5 415.0,241.1 416.0,241.2 417.0,234.2 418.0,240.2 419.0,236.5 420.0,239.1 421.0,236.8 422.0,233.8 423.0,241.2 424.0,236.5 425.0,234.9 426.0,243.8 427.0,237.5 428.0,237.4 429.0,237.2 430.0,232.4 431.0,239.9 432.0,242.5 433.0,238.1 434.0,240.5 435.0,230.5 436.0,237.7 437.0,237.5 438.0,234.0 439.0,237.5 440.0,236.5 441.0,238.5 442.0,237.7 443.0,241.8 444.0,241.3 445.0,238.1 446.0,237.6 447.0,238.5 448.0,238.2 449.0,241.0 450.0,241.2 451.0,240.3 452.0,235.9 453.0,237.4 454.0,236.1 455.0,239.5 456.0,238.2 457.0,240.3 458.0,232.6 459.0,240.8 460.0,239.8 461.0,237.6 462.0,237.4 463.0,243.8 464.0,239.2 465.0,239.5 466.0,240.8 467.0,239.6 468.0,240.0 469.0,239.8 470.0,239.9 471.0,240.4 472.0,235.6 473.0,235.9 474.0,238.5 475.0,235.2 476.0,239.6 477.0,235.4 478.0,238.9 479.0,238.7 480.0,233.8 481.0,238.9 482.0,239.7 483.0,234.4 484.0,236.5 485.0,239.5 486.0,236.6 487.0,240.6 488.0,239.8 489.0,234.6 490.0,239.6 491.0,240.5 492.0,238.0 493.0,238.3 494.0,241.1 495.0,235.3 496.0,230.5 497.0,237.0 498.0,236.4 499.0,237.8 500.0,233.8 501.0,236.9 502.0,237.9 503.0,236.8 504.0,235.6 505.0,243.1 506.0,240.5 507.0,240.0 508.0,234.8 509.0,236.8 510.0,235.9 511.0,239.9 512.0,234.8 513.0,238.0 514.0,242.9"/><polyline transform="translate(0,1)" points="62.0,245.6 63.0,250.4 64.0,244.0 65.0,241.7 66.0,247.0 67.0,244.9 68.0,241.0 69.0,240.3 70.0,242.2 71.0,236.9 72.0,241.9 73.0,243.1 74.0,238.1 75.0,236.5 76.0,229.8 77.0,240.6 78.0,240.2 79.0,242.9 80.0,239.4 81.0,238.2 82.0,241.7 83.0,238.4 84.0,242.4 85.0,240.1 86.0,240.0 87.0,237.1 88.0,241.2 89.0,243.1 90.0,240.4 91.0,242.4 92.0,245.6 93.0,244.4 94.0,244.9 95.0,240.6 96.0,242.0 97.0,243.9 98.0,240.5 99.0,241.3 100.0,240.0 101.0,238.5 102.0,242.8 103.0,238.2 104.0,237.8 105.0,234.6 106.0,234.4 107.0,236.5 108.0,236.3 109.0,237.4 110.0,239.2 111.0,238.8 112.0,242.6 113.0,242.0 114.0,239.5 115.0,239.4 116.0,239.0 117.0,239.0 118.0,241.9 119.0,243.5 120.0,231.5 121.0,240.9 122.0,242.5 123.0,243.7 124.0,242.8 125.0,242.1 126.0,237.3 127.0,240.2 128.0,235.9 129.0,243.2 130.0,237.4 131.0,242.7 132.0,239.8 133.0,240.9 134.0,242.6 135.0,240.4 136.0,239.2 137.0,241.6 138.0,242.7 139.0,239.2 140.0,239.0 141.0,241.1 142.0,241.3 143.0,237.2 144.0,240.9 145.0,245.1 146.0,241.7 147.0,236.3 148.0,238.9 149.0,239.6 150.0,241.0 151.0,238.5 152.0,234.7 153.0,240.5 154.0,239.6 155.0,241.5 156.0,237.0 157.0,241.2 158.0,239.7 159.0,237.9 160.0,243.0 161.0,237.6 162.0,235.5 163.0,239.4 164.0,238.8 165.0,238.3 166.0,240.0 167.0,243.4 168.0,242.8 169.0,237.4 170.0,236.6 171.0,237.1 172.0,240.5 173.0,235.4 174.0,235.9 175.0,238.8 176.0,237.8 177.0,238.9 178.0,238.7 179.0,239.4 180.0,236.8 181.0,239.5 182.0,243.6 183.0,239.5 184.0,237.2 185.0,235.7 186.0,240.1 187.0,239.0 188.0,242.2 189.0,239.7 190.0,236.2 191.0,244.2 192.0,239.6 193.0,238.8 194.0,236.8 195.0,242.8 196.0,235.4 197.0,238.5 198.0,236.6 199.0,240.3 200.0,239.8 201.0,236.8 202.0,233.8 203.0,238.6 204.0,237.9 205.0,240.5 206.0,232.2 207.0,235.9 208.0,236.9 209.0,237.0 210.0,240.2 211.0,238.9 212.0,236.7 213.0,235.5 214.0,236.5 215.0,236.7 216.0,238.2 217.0,237.4 218.0,238.9 219.0,233.8 220.0,239.5 221.0,234.0 222.0,240.5 223.0,235.3 224.0,238.1 225.0,241.0 226.0,231.6 227.0,234.8 228.0,239.9 229.0,239.1 230.0,236.9 231.0,237.6 232.0,234.5 233.0,236.0 234.0,237.9 235.0,239.3 236.0,235.0 237.0,239.1 238.0,242.9 239.0,242.8 240.0,239.1 241.0,239.1 242.0,234.7 243.0,237.4 244.0,237.8 245.0,234.6 246.0,236.4 247.0,236.3 248.0,238.7 249.0,239.8 250.0,242.0 251.0,239.1 252.0,237.5 253.0,242.1 254.0,238.0 255.0,238.9 256.0,235.7 257.0,240.0 258.0,236.7 259.0,241.2 260.0,235.9 261.0,241.3 262.0,237.1 263.0,238.1 264.0,237.6 265.0,234.9 266.0,242.9 267.0,238.2 268.0,234.7 269.0,240.8 270.0,235.0 271.0,236.0 272.0,240.5 273.0,238.8 274.0,236.7 275.0,234.6 276.0,240.5 277.0,234.7 278.0,241.2 279.0,235.6 280.0,238.3 281.0,239.6 282.0,239.9 283.0,242.3 284.0,236.2 285.0,236.7 286.0,238.7 287.0,242.5 288.0,242.2 289.0,240.9 290.0,234.7 291.0,236.6 292.0,235.9 293.0,239.2 294.0,240.2 295.0,241.9 296.0,236.6 297.0,236.3 298.0,240.9 299.0,238.8 300.0,239.1 301.0,237.6 302.0,234.4 303.0,238.7 304.0,240.5 305.0,236.9 306.0,239.2 307.0,236.5 308.0,241.2 309.0,229.8 310.0,239.2 311.0,236.1 312.0,234.6 313.0,237.2 314.0,239.5 315.0,238.4 316.0,242.9 317.0,242.6 318.0,235.3 319.0,234.5 320.0,237.6 321.0,239.2 322.0,238.9 323.0,239.4 324.0,242.7 325.0,232.1 326.0,239.6 327.0,235.4 328.0,240.0 329.0,239.2 330.0,238.0 331.0,237.1 332.0,240.3 333.0,240.0 334.0,237.5 335.0,239.0 336.0,238.6 337.0,238.5 338.0,243.7 339.0,239.9 340.0,241.9 341.0,235.4 342.0,242.9 343.0,241.7 344.0,236.9 345.0,239.4 346.0,238.0 347.0,233.9 348.0,238.2 349.0,236.1 350.0,238.6 351.0,241.1 352.0,239.9 353.0,237.1 354.0,236.8 355.0,243.1 356.0,243.2 357.0,240.4 358.0,237.0 359.0,239.1 360.0,234.4 361.0,243.8 362.0,240.3 363.0,235.8 364.0,238.5 365.0,233.0 366.0,239.5 367.0,232.9 368.0,240.1 369.0,236.5 370.0,240.1 371.0,238.0 372.0,240.4 373.0,242.2 374.0,239.6 375.0,239.2 376.0,238.6 377.0,240.3 378.0,239.9 379.0,236.1 380.0,238.6 381.0,232.6 382.0,239.5 383.0,237.0 384.0,238.4 385.0,238.8 386.0,240.0 387.0,237.6 388.0,237.9 389.0,239.8 390.0,241.5 391.0,238.9 392.0,241.3 393.0,241.2 394.0,237.3 395.0,241.9 396.0,242.9 397.0,240.5 398.0,236.1 399.0,234.6 400.0,240.3 401.0,238.5 402.0,234.8 403.0,242.9 404.0,234.3 405.0,237.4 406.0,236.4 407.0,237.6 408.0,237.2 409.0,236.2 410.0,236.2 411.0,238.9 412.0,237.8 413.0,239.5 414.0,240.5 415.0,241.1 416.0,241.2 417.0,234.2 418.0,240.2 419.0,236.5 420.0,239.1 421.0,236.8 422.0,233.8 423.0,241.2 424.0,236.5 425.0,234.9 426.0,243.8 427.0,237.5 428.0,237.4 429.0,237.2 430.0,232.4 431.0,239.9 432.0,242.5 433.0,238.1 434.0,240.5 435.0,230.5 436.0,237.7 437.0,237.5 438.0,234.0 439.0,237.5 440.0,236.5 441.0,238.5 442.0,237.7 443.0,241.8 444.0,241.3 445.0,238.1 446.0,237.6 447.0,238.5 448.0,238.2 449.0,241.0 450.0,241.2 451.0,240.3 452.0,235.9 453.0,237.4 454.0,236.1 455.0,239.5 456.0,238.2 457.0,240.3 458.0,232.6 459.0,240.8 460.0,239.8 461.0,237.6 462.0,237.4 463.0,243.8 464.0,239.2 465.0,239.5 466.0,240.8 467.0,239.6 468.0,240.0 469.0,239.8 470.0,239.9 471.0,240.4 472.0,235.6 473.0,235.9 474.0,238.5 475.0,235.2 476.0,239.6 477.0,235.4 478.0,238.9 479.0,238.7 480.0,233.8 481.0,238.9 482.0,239.7 483.0,234.4 484.0,236.5 485.0,239.5 486.0,236.6 487.0,240.6 488.0,239.8 489.0,234.6 490.0,239.6 491.0,240.5 492.0,238.0 493.0,238.3 494.0,241.1 495.0,235.3 496.0,230.5 497.0,237.0 498.0,236.4 499.0,237.8 500.0,233.8 501.0,236.9 502.0,237.9 503.0,236.8 504.0,235.6 505.0,243.1 506.0,240.5 507.0,240.0 508.0,234.8 509.0,236.8 510.0,235.9 511.0,239.9 512.0,234.8 513.0,238.0 514.0,242.9"/></g><rect x="516" y="224" width="1" height="130" fill="#c0c0c0" shape-rendering="crispEdges"/><g font-family="'Liberation Sans', sans-serif" letter-spacing="-0.6"><text x="53.7" y="78.0" text-anchor="end" fill="#000" font-size="11.6" >20</text><text x="53.7" y="104.0" text-anchor="end" fill="#000" font-size="11.6" >16</text><text x="53.7" y="130.0" text-anchor="end" fill="#000" font-size="11.6" >12</text><text x="53.7" y="156.0" text-anchor="end" fill="#000" font-size="11.6" >8</text><text x="53.7" y="182.0" text-anchor="end" fill="#000" font-size="11.6" >4</text><text x="533" y="78.0" text-anchor="start" fill="#000" font-size="11.6" >16</text><text x="533" y="94.25" text-anchor="start" fill="#000" font-size="11.6" >14</text><text x="533" y="110.5" text-anchor="start" fill="#000" font-size="11.6" >12</text><text x="533" y="126.75" text-anchor="start" fill="#000" font-size="11.6" >10</text><text x="533" y="143.0" text-anchor="start" fill="#000" font-size="11.6" >8</text><text x="533" y="159.25" text-anchor="start" fill="#000" font-size="11.6" >6</text><text x="533" y="175.5" text-anchor="start" fill="#000" font-size="11.6" >4</text><text x="533" y="191.75" text-anchor="start" fill="#000" font-size="11.6" >2</text><text x="63.2" y="217" text-anchor="middle" fill="#000" font-size="11.6" >0.0</text><text x="114.3" y="217" text-anchor="middle" fill="#000" font-size="11.6" >0.5</text><text x="166.3" y="217" text-anchor="middle" fill="#000" font-size="11.6" >1.0</text><text x="218.3" y="217" text-anchor="middle" fill="#000" font-size="11.6" >1.5</text><text x="270.3" y="217" text-anchor="middle" fill="#000" font-size="11.6" >2.0</text><text x="322.3" y="217" text-anchor="middle" fill="#000" font-size="11.6" >2.5</text><text x="374.3" y="217" text-anchor="middle" fill="#000" font-size="11.6" >3.0</text><text x="426.3" y="217" text-anchor="middle" fill="#000" font-size="11.6" >3.5</text><text x="478.3" y="217" text-anchor="middle" fill="#000" font-size="11.6" >4.0</text><text x="530.3" y="217" text-anchor="middle" fill="#000" font-size="11.6" >4.5</text><text x="53.7" y="227.0" text-anchor="end" fill="#000" font-size="11.6" >10</text><text x="533" y="227.0" text-anchor="start" fill="#000" font-size="11.6" >10</text><text x="53.7" y="254.0" text-anchor="end" fill="#000" font-size="11.6" >8</text><text x="533" y="254.0" text-anchor="start" fill="#000" font-size="11.6" >8</text><text x="53.7" y="280.0" text-anchor="end" fill="#000" font-size="11.6" >6</text><text x="533" y="280.0" text-anchor="start" fill="#000" font-size="11.6" >6</text><text x="53.7" y="306.0" text-anchor="end" fill="#000" font-size="11.6" >4</text><text x="533" y="306.0" text-anchor="start" fill="#000" font-size="11.6" >4</text><text x="53.7" y="332.0" text-anchor="end" fill="#000" font-size="11.6" >2</text><text x="533" y="332.0" text-anchor="start" fill="#000" font-size="11.6" >2</text><text x="63.2" y="367" text-anchor="middle" fill="#000" font-size="11.6" >0.0</text><text x="114.3" y="367" text-anchor="middle" fill="#000" font-size="11.6" >0.5</text><text x="166.3" y="367" text-anchor="middle" fill="#000" font-size="11.6" >1.0</text><text x="218.3" y="367" text-anchor="middle" fill="#000" font-size="11.6" >1.5</text><text x="270.3" y="367" text-anchor="middle" fill="#000" font-size="11.6" >2.0</text><text x="322.3" y="367" text-anchor="middle" fill="#000" font-size="11.6" >2.5</text><text x="374.3" y="367" text-anchor="middle" fill="#000" font-size="11.6" >3.0</text><text x="426.3" y="367" text-anchor="middle" fill="#000" font-size="11.6" >3.5</text><text x="478.3" y="367" text-anchor="middle" fill="#000" font-size="11.6" >4.0</text><text x="530.3" y="367" text-anchor="middle" fill="#000" font-size="11.6" >4.5</text></g></svg>

<div class="btn" style="left:562px;top:59px;width:68px;height:19px;"></div>
<div class="btng" style="left:564px;top:70px;width:64px;height:6px;"></div>
<div class="btn" style="left:654px;top:59px;width:68px;height:19px;"></div>
<div class="btng" style="left:656px;top:70px;width:64px;height:6px;"></div>
<div style="left:656px;top:60px;width:65px;height:17px;border:1px dotted #000;"></div>
<div class="gb" style="left:561px;top:93px;width:162px;height:73px;"></div>
<div class="wm" style="left:567px;top:90px;width:63px;height:6px;"></div>
<div class="gb" style="left:561px;top:174px;width:162px;height:165px;"></div>
<div class="wm" style="left:567px;top:171px;width:46px;height:6px;"></div>
<div style="left:631px;top:185px;width:82px;height:20px;border:1px solid #808080;background:#fff;"></div>
<div style="left:696px;top:186px;width:16px;height:18px;background:linear-gradient(#fff 0,#fff 7px,#c0c0c0 7px);border:1px solid #b8b8b8;border-radius:2px;"></div>
<svg style="left:699px;top:191px;" width="9" height="8" viewBox="0 0 9 8"><path d="M1 1.5L4.5 5L8 1.5" fill="none" stroke="#000" stroke-width="2"/></svg>
<div class="edit" style="left:631px;top:209px;width:70px;height:18px;"></div>
<div class="edit" style="left:631px;top:232px;width:70px;height:18px;"></div>
<div class="gb" style="left:561px;top:344px;width:162px;height:24px;"></div>
<div class="gb" style="left:561px;top:374px;width:162px;height:63px;"></div>
<div class="gbs" style="left:18px;top:375px;width:170px;height:62px;"></div>
<div class="wm" style="left:26px;top:372px;width:61px;height:6px;"></div>
<div style="left:28px;top:371px;width:8px;height:8px;background:#00ffff;border:1px solid #000060;"></div>
<div class="gbs" style="left:198px;top:375px;width:170px;height:62px;"></div>
<div class="wm" style="left:206px;top:372px;width:71px;height:6px;"></div>
<div style="left:208px;top:371px;width:8px;height:8px;background:#ffff00;border:1px solid #000060;"></div>
<div class="gbs" style="left:379px;top:375px;width:170px;height:45px;"></div>
<div class="wm" style="left:387px;top:372px;width:42px;height:6px;"></div>
<div style="left:389px;top:371px;width:8px;height:8px;background:#ff00ff;border:1px solid #000060;"></div>
<div class="cb" style="left:569px;top:255px;"></div><svg style="left:570px;top:256px;" width="11" height="11" viewBox="0 0 11 11"><path d="M2 5.2L4.6 8L9.4 2.6" fill="none" stroke="#00f000" stroke-width="2.6"/></svg><div class="cb" style="left:569px;top:272px;"></div><svg style="left:570px;top:273px;" width="11" height="11" viewBox="0 0 11 11"><path d="M2 5.2L4.6 8L9.4 2.6" fill="none" stroke="#00f000" stroke-width="2.6"/></svg><div class="cb" style="left:569px;top:288px;"></div><svg style="left:570px;top:289px;" width="11" height="11" viewBox="0 0 11 11"><path d="M2 5.2L4.6 8L9.4 2.6" fill="none" stroke="#00f000" stroke-width="2.6"/></svg><div class="cb" style="left:569px;top:305px;"></div><svg style="left:570px;top:306px;" width="11" height="11" viewBox="0 0 11 11"><path d="M2 5.2L4.6 8L9.4 2.6" fill="none" stroke="#00f000" stroke-width="2.6"/></svg><div class="cb" style="left:569px;top:321px;"></div><svg style="left:570px;top:322px;" width="11" height="11" viewBox="0 0 11 11"><path d="M2 5.2L4.6 8L9.4 2.6" fill="none" stroke="#00f000" stroke-width="2.6"/></svg>
<div class="ttl" id="ttl1" style="left:6.0px;top:8px;letter-spacing:0.54px;">CD Speed : Disc Quality Test - BENQ</div>
<div class="ttl" id="ttl2" style="left:272.2px;top:8px;letter-spacing:0.13px;">DVD DD DW1620</div>
<div class="ttl" id="ttl3" style="left:399.2px;top:8px;letter-spacing:-0.16px;">B7S9</div>
<div class="t" id="tab" style="left:22.0px;top:38px;letter-spacing:0.29px;">Disc Quality</div>
<div class="t" id="rec1" style="left:272.0px;top:57px;letter-spacing:0.29px;">recorded with BENQ</div>
<div class="t" id="rec2" style="left:393.0px;top:57px;letter-spacing:-0.08px;">DVD DD DW1620</div>
<div class="t" id="rec3" style="left:498.0px;top:57px;letter-spacing:0.25px;">vB7S9</div>
<div class="t jp" id="b1" style="left:581.6px;top:61px;letter-spacing:1.50px;">開始</div>
<div class="t jp" id="b2" style="left:666.0px;top:61px;letter-spacing:0.50px;">終了(<span class="u">X</span>)</div>
<div class="t jp bl nofit" id="di" style="left:568.0px;top:85px;"><span class="kw" style="width:35.5px"><span class="ks" style="transform:scaleX(0.74)">ディスク</span></span>情報</div>
<div class="t jp nofit" id="l1" style="left:568.0px;top:100px;"><span class="kw" style="width:23.5px"><span class="ks" style="transform:scaleX(0.66)">タイプ</span></span>:</div>
<div class="t" id="l2" style="left:568.0px;top:115px;letter-spacing:0.10px;">ID:</div>
<div class="t jp" id="l3" style="left:567.0px;top:129px;letter-spacing:1.00px;">日付:</div>
<div class="t" id="l4" style="left:568.0px;top:144px;letter-spacing:0.10px;">Label:</div>
<div class="t nv" id="v1" style="left:616.0px;top:100px;letter-spacing:1.25px;">DVD-R</div>
<div class="t nv" id="v2" style="left:616.0px;top:115px;letter-spacing:0.25px;">MXL RG03</div>
<div class="t nv" id="v3" style="left:616.0px;top:129px;letter-spacing:0.11px;">17 October 2004</div>
<div class="t nv" id="v4" style="left:616.0px;top:144px;letter-spacing:-0.43px;">CDS_TEST_B2</div>
<div class="t bl" id="st" style="left:569.0px;top:166px;letter-spacing:0.33px;">Settings</div>
<div class="t jp" id="s1" style="left:568.0px;top:188px;letter-spacing:0.26px;">転送速度</div>
<div class="t jp" id="s2" style="left:568.0px;top:212px;letter-spacing:0.25px;">開始</div>
<div class="t jp" id="s3" style="left:568.0px;top:235px;letter-spacing:0.26px;">終了位置</div>
<div class="t jp" id="s4" style="left:634.0px;top:188px;letter-spacing:0.75px;">最大</div>
<div class="t" id="s5" style="left:632.5px;top:211px;letter-spacing:0.33px;">0000 MB</div>
<div class="t" id="s6" style="left:632.5px;top:234px;letter-spacing:0.33px;">4489 MB</div>
<div class="t" id="c1" style="left:584.6px;top:255px;letter-spacing:0.27px;">Show C1/PIE</div>
<div class="t" id="c2" style="left:584.6px;top:271px;letter-spacing:0.27px;">Show C2/PIF</div>
<div class="t" id="c3" style="left:584.6px;top:287px;letter-spacing:0.44px;">Show Jitter</div>
<div class="t" id="c4" style="left:584.6px;top:304px;letter-spacing:-0.03px;">Show Read Speed</div>
<div class="t" id="c5" style="left:584.6px;top:320px;letter-spacing:0.04px;">Show Write Speed</div>
<div class="t jp nofit" id="q1" style="left:568.0px;top:349px;">品質<span class="kw" style="width:24.5px"><span class="ks" style="transform:scaleX(0.68)">スコア</span></span>:</div>
<div class="t nv" id="q2" style="right:35.0px;top:349px;letter-spacing:1.00px;">97</div>
<div class="t jp" id="p1" style="left:568.0px;top:382px;letter-spacing:0.05px;">進行状況:</div>
<div class="t jp nofit" id="p2" style="left:568.0px;top:400px;"><span class="kw" style="width:43px"><span class="ks" style="transform:scaleX(0.72)">ポジション</span></span>:</div>
<div class="t jp" id="p3" style="left:568.0px;top:418px;letter-spacing:0.25px;">速度:</div>
<div class="t nv" id="p4" style="right:34.5px;top:381px;">100 %</div>
<div class="t nv" id="p5" style="right:36.2px;top:399px;letter-spacing:0.20px;">4488 MB</div>
<div class="t nv" id="p6" style="right:34.3px;top:417px;letter-spacing:0.15px;">8.38 X</div>
<div class="t" id="e0" style="left:40.0px;top:367px;letter-spacing:0.04px;">PI Errors</div>
<div class="t jp" id="e1" style="left:26.0px;top:382px;letter-spacing:0.25px;">平均:</div>
<div class="t jp" id="e2" style="left:26.0px;top:400px;letter-spacing:0.25px;">最大:</div>
<div class="t jp" id="e3" style="left:26.0px;top:418px;letter-spacing:0.33px;">合計 :</div>
<div class="t nv" id="e4" style="right:568.3px;top:382px;letter-spacing:-0.33px;">2.27</div>
<div class="t nv" id="e5" style="right:567.6px;top:400px;letter-spacing:0.75px;">12</div>
<div class="t nv" id="e6" style="right:567.9px;top:418px;letter-spacing:0.12px;">20684</div>
<div class="t" id="f0" style="left:219.7px;top:367px;letter-spacing:0.20px;">PI Failures</div>
<div class="t jp" id="f1" style="left:208.0px;top:382px;letter-spacing:-0.25px;">平均:</div>
<div class="t jp" id="f2" style="left:208.0px;top:400px;letter-spacing:-0.25px;">最大:</div>
<div class="t jp" id="f3" style="left:208.0px;top:418px;letter-spacing:0.33px;">合計 :</div>
<div class="t nv" id="f4" style="right:385.0px;top:382px;">0.05</div>
<div class="t nv" id="f5" style="right:386.0px;top:400px;">6</div>
<div class="t nv" id="f6" style="right:386.2px;top:418px;letter-spacing:-0.25px;">376</div>
<div class="t" id="j0" style="left:401.4px;top:367px;letter-spacing:0.55px;">Jitter</div>
<div class="t jp" id="j1" style="left:388.0px;top:382px;letter-spacing:0.25px;">平均:</div>
<div class="t jp" id="j2" style="left:388.0px;top:400px;letter-spacing:0.25px;">最大:</div>
<div class="t nv" id="j4" style="right:205.6px;top:382px;letter-spacing:-0.60px;">8.59 %</div>
<div class="t nv" id="j5" style="right:205.9px;top:400px;letter-spacing:-0.95px;">9.6 %</div>
<div class="t" id="po" style="left:389.0px;top:423px;letter-spacing:0.05px;">PO Failures:</div>
<div class="t nv" id="pv" style="right:206.0px;top:423px;">0</div>
</div>
</body>
</html>
